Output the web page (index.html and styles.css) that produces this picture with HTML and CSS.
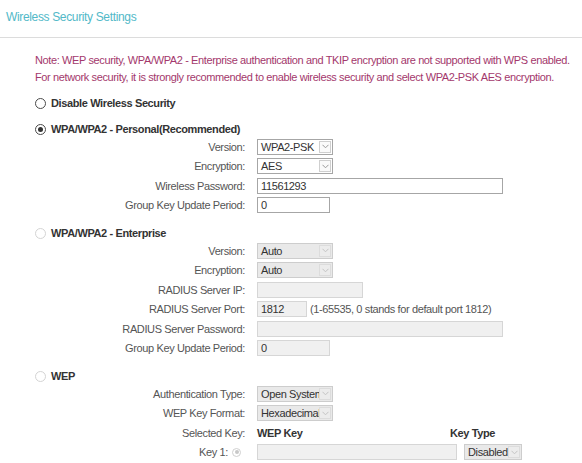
FILE: index.html
```html
<!DOCTYPE html>
<html>
<head>
<meta charset="utf-8">
<title>Wireless Security Settings</title>
<link rel="stylesheet" href="styles.css">
</head>
<body>
<div class="page">
  <div class="title">Wireless Security Settings</div>
  <div class="content">
    <p class="note">Note: WEP security, WPA/WPA2 - Enterprise authentication and TKIP encryption are not supported with WPS enabled.<br>For network security, it is strongly recommended to enable wireless security and select WPA2-PSK AES encryption.</p>

    <div class="option first"><span class="radio"></span>Disable Wireless Security</div>

    <div class="option"><span class="radio checked"></span>WPA/WPA2 - Personal(Recommended)</div>
    <div class="form">
      <div class="row"><span class="label">Version:</span><span class="ctrl"><span class="select w76"><span class="val">WPA2-PSK</span><span class="arrow"><svg width="7" height="5" viewBox="0 0 7 5"><path d="M0.5 0.8 L3.5 3.8 L6.5 0.8" fill="none" stroke="#9a9a9a" stroke-width="1"/></svg></span></span></span></div>
      <div class="row"><span class="label">Encryption:</span><span class="ctrl"><span class="select w76"><span class="val">AES</span><span class="arrow"><svg width="7" height="5" viewBox="0 0 7 5"><path d="M0.5 0.8 L3.5 3.8 L6.5 0.8" fill="none" stroke="#9a9a9a" stroke-width="1"/></svg></span></span></span></div>
      <div class="row"><span class="label">Wireless Password:</span><span class="ctrl"><span class="input w246">11561293</span></span></div>
      <div class="row"><span class="label">Group Key Update Period:</span><span class="ctrl"><span class="input w73">0</span></span></div>
    </div>

    <div class="option"><span class="radio off"></span>WPA/WPA2 - Enterprise</div>
    <div class="form">
      <div class="row"><span class="label">Version:</span><span class="ctrl"><span class="select disabled w76"><span class="val">Auto</span><span class="arrow"><svg width="7" height="5" viewBox="0 0 7 5"><path d="M0.5 0.8 L3.5 3.8 L6.5 0.8" fill="none" stroke="#c4c4c4" stroke-width="1"/></svg></span></span></span></div>
      <div class="row"><span class="label">Encryption:</span><span class="ctrl"><span class="select disabled w76"><span class="val">Auto</span><span class="arrow"><svg width="7" height="5" viewBox="0 0 7 5"><path d="M0.5 0.8 L3.5 3.8 L6.5 0.8" fill="none" stroke="#c4c4c4" stroke-width="1"/></svg></span></span></span></div>
      <div class="row"><span class="label">RADIUS Server IP:</span><span class="ctrl"><span class="input disabled w106"></span></span></div>
      <div class="row"><span class="label">RADIUS Server Port:</span><span class="ctrl"><span class="input disabled w50">1812</span><span class="hint">(1-65535, 0 stands for default port 1812)</span></span></div>
      <div class="row"><span class="label">RADIUS Server Password:</span><span class="ctrl"><span class="input disabled w246"></span></span></div>
      <div class="row"><span class="label">Group Key Update Period:</span><span class="ctrl"><span class="input disabled w73">0</span></span></div>
    </div>

    <div class="option"><span class="radio off"></span>WEP</div>
    <div class="form">
      <div class="row"><span class="label">Authentication Type:</span><span class="ctrl"><span class="select disabled w76"><span class="val">Open System</span><span class="arrow"><svg width="7" height="5" viewBox="0 0 7 5"><path d="M0.5 0.8 L3.5 3.8 L6.5 0.8" fill="none" stroke="#c4c4c4" stroke-width="1"/></svg></span></span></span></div>
      <div class="row"><span class="label">WEP Key Format:</span><span class="ctrl"><span class="select disabled w76"><span class="val">Hexadecimal</span><span class="arrow"><svg width="7" height="5" viewBox="0 0 7 5"><path d="M0.5 0.8 L3.5 3.8 L6.5 0.8" fill="none" stroke="#c4c4c4" stroke-width="1"/></svg></span></span></span></div>
      <div class="row"><span class="label">Selected Key:</span><span class="ctrl"><span class="colhead keycol">WEP Key</span><span class="colhead">Key Type</span></span></div>
      <div class="row"><span class="label keylabel">Key 1:<span class="radio small"></span></span><span class="ctrl"><span class="input disabled w200"></span><span class="select disabled w58 gap7"><span class="val">Disabled</span><span class="arrow"><svg width="7" height="5" viewBox="0 0 7 5"><path d="M0.5 0.8 L3.5 3.8 L6.5 0.8" fill="none" stroke="#c4c4c4" stroke-width="1"/></svg></span></span></span></div>
    </div>
  </div>
</div>
</body>
</html>
```

FILE: styles.css
```css
html, body {
  margin: 0;
  padding: 0;
  background: #fff;
}
body {
  font-family: Arial, "Liberation Sans", sans-serif;
  font-size: 11px;
  letter-spacing: -0.38px;
  color: #333;
  overflow: hidden;
  height: 463px;
}
.page {
  width: 582px;
}
.title {
  height: 29px;
  padding: 8px 0 0 6px;
  line-height: 18px;
  font-size: 12px;
  letter-spacing: -0.35px;
  color: #52b9c8;
  border-bottom: 1px solid #dcdcdc;
}
.content {
  padding-left: 35px;
}
.note {
  margin: 14px 0 0 0;
  line-height: 17px;
  color: #a3386c;
  white-space: nowrap;
}
.option {
  display: flex;
  align-items: center;
  height: 16px;
  line-height: 16px;
  margin-top: 10px;
  font-weight: bold;
  color: #333;
}
.option.first {
  margin-top: 9px;
}
.radio {
  box-sizing: border-box;
  width: 11px;
  height: 11px;
  border: 1px solid #4a4a4a;
  border-radius: 50%;
  margin-right: 5px;
  display: inline-flex;
  align-items: center;
  justify-content: center;
  background: #fff;
}
.radio.checked::after {
  content: "";
  width: 5px;
  height: 5px;
  border-radius: 50%;
  background: #333;
}
.radio.off {
  border-color: #d4d4d4;
}
.radio.small {
  width: 9px;
  height: 9px;
  border-color: #d0d0d0;
  margin: 0 0 0 4px;
}
.radio.small::after {
  content: "";
  width: 4px;
  height: 4px;
  border-radius: 50%;
  background: #c8c8c8;
}
.form {
  display: flex;
  flex-direction: column;
}
.row {
  display: grid;
  grid-template-columns: 210px 1fr;
  column-gap: 12px;
  height: 19.5px;
  align-items: center;
}
.label {
  text-align: right;
  color: #555;
  white-space: nowrap;
}
.keylabel {
  display: flex;
  justify-content: flex-end;
  align-items: center;
  padding-right: 4px;
}
.ctrl {
  display: flex;
  align-items: center;
  white-space: nowrap;
}
.select {
  box-sizing: border-box;
  display: inline-flex;
  align-items: center;
  height: 16px;
  border: 1px solid #a6a6a6;
  background: #fff;
  color: #333;
  overflow: hidden;
}
.select .val {
  flex: 1;
  padding-left: 3px;
  line-height: 14px;
  overflow: hidden;
  white-space: nowrap;
}
.select .arrow {
  box-sizing: border-box;
  width: 12px;
  height: 12px;
  margin-right: 1px;
  border: 1px solid #cfcfcf;
  background: #fafafa;
  display: flex;
  align-items: center;
  justify-content: center;
  flex: none;
}
.select.disabled {
  background: #e9e9e9;
  border-color: #cdcdcd;
}
.select.disabled .arrow {
  border-color: #dcdcdc;
  background: #ececec;
}
.input {
  box-sizing: border-box;
  display: inline-block;
  height: 16px;
  line-height: 14px;
  border: 1px solid #a6a6a6;
  background: #fff;
  padding-left: 3px;
  color: #333;
}
.input.disabled {
  background: #f0f0f0;
  border-color: #d6d6d6;
}
.w76 { width: 76px; }
.w58 { width: 58px; }
.w246 { width: 246px; }
.w73 { width: 73px; }
.w106 { width: 106px; }
.w50 { width: 50px; }
.w200 { width: 200px; }
.gap7 { margin-left: 7px; }
.hint {
  margin-left: 3px;
  color: #555;
}
.colhead {
  font-weight: bold;
  color: #333;
}
.keycol {
  width: 193px;
}
```
